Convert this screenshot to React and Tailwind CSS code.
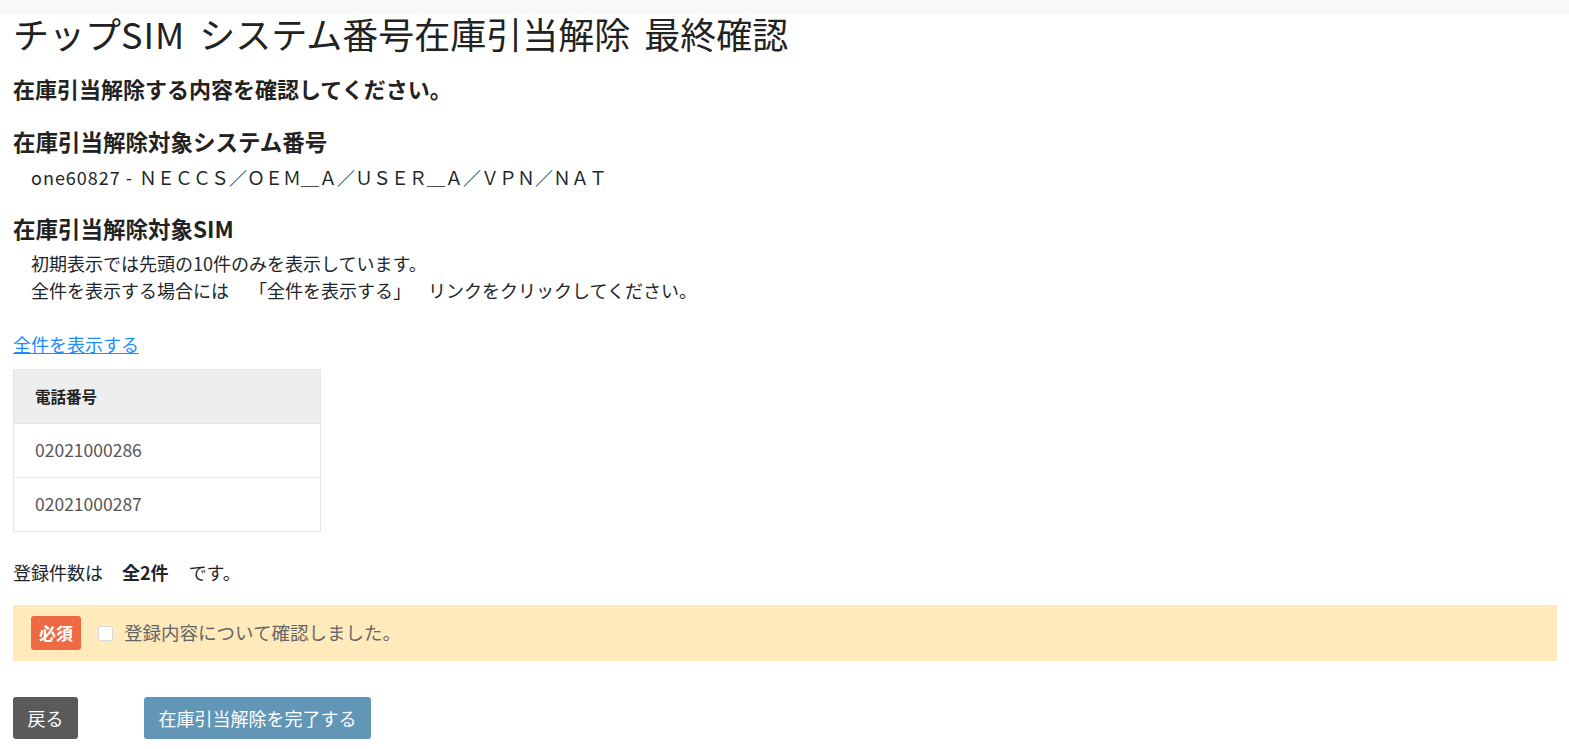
export default function App() {
  const font = { fontFamily: '"Noto Sans CJK JP", "Noto Sans", sans-serif' };
  return (
    <div className="min-h-screen bg-white text-[#212529]" style={font}>
      <div className="h-[14px] bg-[#f7f8fa]" />
      <div className="pl-[13px] pr-[12px]">
        <h1 className="text-[36px] leading-[36px] pt-[1px] font-normal text-[#222] [word-spacing:6px]">
          チップ<span className="tracking-[1px]">SIM</span> システム番号在庫引当解除 最終確認
        </h1>
        <h2 className="mt-[22px] text-[22px] leading-[30px] font-bold text-[#222]">
          在庫引当解除する内容を確認してください。
        </h2>
        <h2 className="mt-[23px] text-[22.5px] leading-[30px] font-bold text-[#222]">
          在庫引当解除対象システム番号
        </h2>
        <p className="mt-[8px] pl-[18px] text-[18px] leading-[27px]">
          <span className="tracking-[1px] mr-[6px]">one60827 -</span>
          ＮＥＣＣＳ／ＯＥＭ＿Ａ／ＵＳＥＲ＿Ａ／ＶＰＮ／ＮＡＴ
        </p>
        <h2 className="mt-[22px] text-[22.5px] leading-[30px] font-bold text-[#222]">
          在庫引当解除対象SIM
        </h2>
        <div className="mt-[7px] pl-[18px] text-[18px] leading-[27px]">
          <p>初期表示では先頭の10件のみを表示しています。</p>
          <p>
            全件を表示する場合には
            <span className="ml-[20px]">「全件を表示する」</span>
            <span className="ml-[17px]">リンクをクリックしてください。</span>
          </p>
        </div>
        <div className="mt-[27px] text-[18px] leading-[27px]">
          <a href="#" className="text-[#1a8cff] underline">全件を表示する</a>
        </div>
        <table className="mt-[11px] w-[308px] border-collapse border border-[#e3e6ea] text-left">
          <thead>
            <tr className="h-[54px] bg-[#eeeeee]">
              <th className="pl-[21px] text-[15.5px] font-bold text-[#222]">電話番号</th>
            </tr>
          </thead>
          <tbody>
            <tr className="h-[54px] border-t border-[#e3e6ea]">
              <td className="pl-[21px] text-[17.5px] text-[#555]">02021000286</td>
            </tr>
            <tr className="h-[54px] border-t border-[#e3e6ea]">
              <td className="pl-[21px] text-[17.5px] text-[#555]">02021000287</td>
            </tr>
          </tbody>
        </table>
        <p className="mt-[27px] text-[18px] leading-[27px]">
          <span>登録件数は</span>
          <span className="ml-[19px] font-bold">全2件</span>
          <span className="ml-[20px]">です。</span>
        </p>
        <div className="mt-[19px] h-[56px] bg-[#ffeabb] flex items-center pl-[18px]">
          <span className="h-[34px] w-[50px] rounded-[3px] bg-[#ee6a43] text-white font-bold text-[17px] flex items-center justify-center">
            必須
          </span>
          <label className="ml-[17px] flex items-center text-[18.5px] text-[#666]">
            <span className="h-[15px] w-[15px] rounded-[2px] border border-[#d6d9dd] bg-white" />
            <span className="ml-[11px]">登録内容について確認しました。</span>
          </label>
        </div>
        <div className="mt-[36px] flex items-center">
          <button className="h-[42px] w-[65px] rounded-[3px] bg-[#5a5a5a] text-white text-[18px]">
            戻る
          </button>
          <button className="ml-[66px] h-[42px] w-[227px] rounded-[3px] bg-[#6196b6] text-white text-[18px]">
            在庫引当解除を完了する
          </button>
        </div>
      </div>
    </div>
  );
}
